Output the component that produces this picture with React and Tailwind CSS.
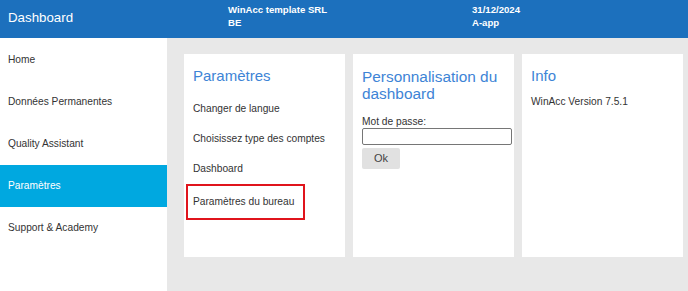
export default function App() {
  const nav = ["Home", "Données Permanentes", "Quality Assistant", "Paramètres", "Support & Academy"];
  return (
    <div className="h-screen flex flex-col font-['Liberation_Sans',Arial,sans-serif] text-[#333]">
      <header className="h-[38px] bg-[#1c70bd] flex items-start text-white shrink-0">
        <div className="w-[228px] pl-2 pt-[8px] text-[13.3px]">Dashboard</div>
        <div className="w-[244px] pt-[3px] text-[9.6px] font-bold leading-[13px]">
          <div>WinAcc template SRL</div>
          <div>BE</div>
        </div>
        <div className="pt-[3px] text-[9.6px] font-bold leading-[13px]">
          <div>31/12/2024</div>
          <div>A-app</div>
        </div>
      </header>
      <div className="flex flex-1">
        <nav className="w-[167px] bg-white shrink-0 pt-px">
          {nav.map((item) => (
            <div
              key={item}
              className={
                item === "Paramètres"
                  ? "h-[42px] flex items-center px-2 text-[10.2px] bg-[#00a8e0] text-white"
                  : "h-[42px] flex items-center px-2 text-[10.2px]"
              }
            >
              {item}
            </div>
          ))}
        </nav>
        <main className="flex-1 bg-[#e8e8e8] pl-[17px] pt-[16px] flex gap-2 items-start">
          <section className="w-[161px] h-[203px] bg-white px-[9px] pt-[12px]">
            <h2 className="text-[15px] text-[#3d84d6] leading-[20px]">Paramètres</h2>
            <div className="mt-[8px] text-[10.2px] flex flex-col">
              <div className="h-[30px] flex items-center">Changer de langue</div>
              <div className="h-[30px] flex items-center">Choisissez type des comptes</div>
              <div className="h-[30px] flex items-center">Dashboard</div>
              <div className="h-[36px] -ml-[7px] w-[119px] flex items-center pl-[5px] border-2 border-[#e0141c] whitespace-nowrap">
                Paramètres du bureau
              </div>
            </div>
          </section>
          <section className="w-[161px] h-[203px] bg-white px-[9px] pt-[14px]">
            <h2 className="text-[15.4px] text-[#3d84d6] leading-[17px]">Personnalisation du dashboard</h2>
            <div className="mt-[14px] text-[10.2px] leading-[12px]">Mot de passe:</div>
            <input className="block w-[150px] h-[17px] border border-[#767676] rounded-[2px] bg-white" />
            <button className="mt-[1px] w-[38px] h-[21px] bg-[#e1e1e1] text-[11px] text-[#444] rounded-[2px]">Ok</button>
          </section>
          <section className="w-[161px] h-[203px] bg-white px-[9px] pt-[12px]">
            <h2 className="text-[15px] text-[#3d84d6] leading-[20px]">Info</h2>
            <div className="mt-[8px] text-[10.2px]">WinAcc Version 7.5.1</div>
          </section>
        </main>
      </div>
    </div>
  );
}
